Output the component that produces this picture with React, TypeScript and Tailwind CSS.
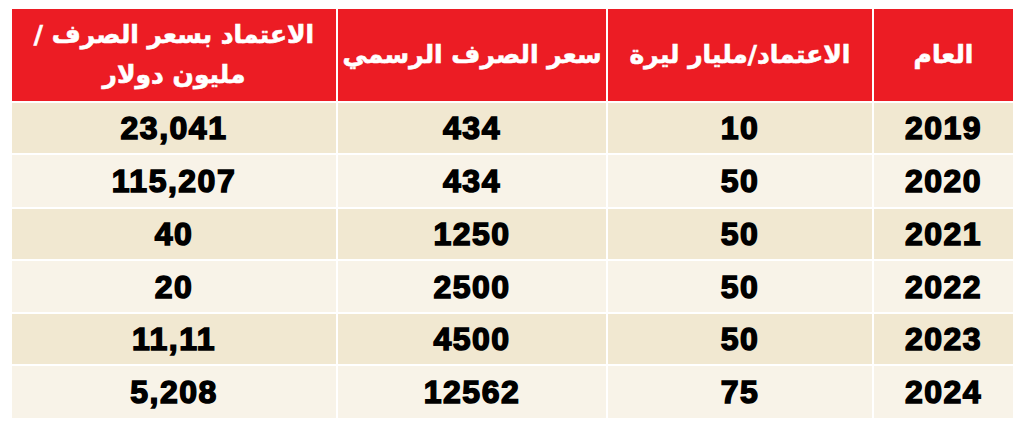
import React from "react";

const rows = [
  ["2019", "10", "434", "23,041"],
  ["2020", "50", "434", "115,207"],
  ["2021", "50", "1250", "40"],
  ["2022", "50", "2500", "20"],
  ["2023", "50", "4500", "11,11"],
  ["2024", "75", "12562", "5,208"],
];

const heights = ["h-[50px]", "h-[52px]", "h-[50px]", "h-[51px]", "h-[50px]", "h-[52px]"];

export default function App() {
  return (
    <div className="w-[1024px] h-[427px] bg-white pt-[9px] pl-[12px]">
      <div
        dir="rtl"
        className="grid w-[1001px] grid-cols-[139px_264px_268px_324px] gap-[2px] bg-white"
      >
        {["العام", "الاعتماد/مليار ليرة", "سعر الصرف الرسمي"].map((h) => (
          <div
            key={h}
            className="h-[92px] bg-[#ec1c24] flex items-center justify-center text-center whitespace-nowrap text-white text-[25px] font-bold [font-family:'DejaVu_Sans',sans-serif] [-webkit-text-stroke:0.6px_white]"
          >
            {h}
          </div>
        ))}
        <div className="h-[92px] bg-[#ec1c24] flex flex-col items-center justify-center text-center whitespace-nowrap text-white text-[25px] font-bold leading-[40px] [font-family:'DejaVu_Sans',sans-serif] [-webkit-text-stroke:0.6px_white]">
          <span>الاعتماد بسعر الصرف /</span>
          <span>مليون دولار</span>
        </div>
        {rows.map((r, i) =>
          r.map((c, j) => (
            <div
              key={i + "-" + j}
              className={`${heights[i]} ${
                i % 2 === 0 ? "bg-[#f1e8d1]" : "bg-[#f8f3e8]"
              } flex items-center justify-center text-[32px] tracking-[1.5px] font-bold text-black [font-family:'Liberation_Sans',Arial,sans-serif] [-webkit-text-stroke:1.5px_black]`}
            >
              <span dir="ltr">{c}</span>
            </div>
          ))
        )}
      </div>
    </div>
  );
}
